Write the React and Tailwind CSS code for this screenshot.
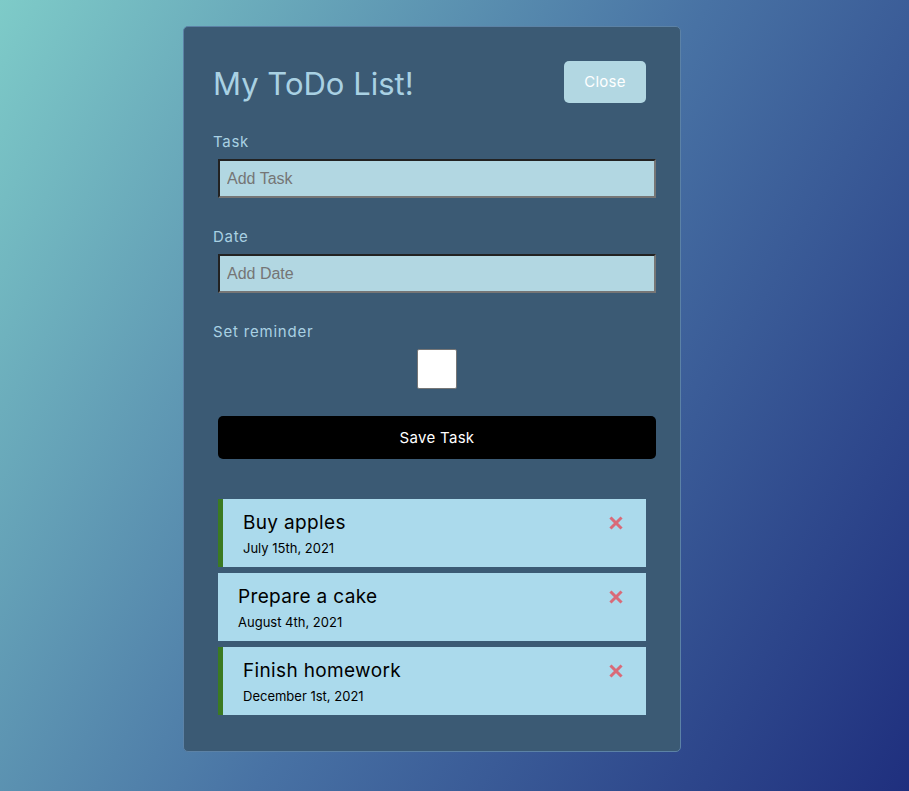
import React from "react";

const tasks = [
  { text: "Buy apples", day: "July 15th, 2021", reminder: true },
  { text: "Prepare a cake", day: "August 4th, 2021", reminder: false },
  { text: "Finish homework", day: "December 1st, 2021", reminder: true },
];

function XIcon() {
  return (
    <svg width="14" height="14" viewBox="0 0 14 14" className="shrink-0">
      <path d="M2.5 2.5 L11.5 11.5 M11.5 2.5 L2.5 11.5" stroke="#d96a78" strokeWidth="3" strokeLinecap="square" />
    </svg>
  );
}

export default function App() {
  return (
    <div
      className="min-h-screen w-full overflow-hidden bg-[linear-gradient(120deg,#7ecbc8_0%,#4872a4_52%,#1f2f7e_100%)] pt-[26px] pl-[183px]"
      style={{ fontFamily: "Inter, 'Noto Sans', sans-serif" }}
    >
      <div className="w-[498px] rounded-[5px] border border-[#5c82a6] bg-[#3b5a74] px-[29px] pt-[29px] pb-[36px]">
        <div className="flex h-[52px] items-center justify-between">
          <h1 className="pt-[3px] text-[31px] font-normal leading-none text-[#a9d1e3]">My ToDo List!</h1>
          <button className="mr-[5px] h-[42px] w-[82px] rounded-[5px] bg-[#b2d7e2] pt-[1px] text-[15px] tracking-[0.3px] text-white">Close</button>
        </div>

        <div className="mt-[23px]">
          <label className="block h-[20px] text-[15px] leading-[22px] tracking-[0.7px] text-[#a9d1e3]">Task</label>
          <input
            className="mt-[8px] ml-[5px] block h-[39px] w-[438px] border-2 border-t-[#222] border-l-[#222] border-b-[#767676] border-r-[#767676] bg-[#b2d7e2] px-[7px] text-[16px] text-black placeholder:text-[#757575] outline-none"
            style={{ fontFamily: "'Liberation Sans', Arial, sans-serif" }}
            placeholder="Add Task"
          />
        </div>

        <div className="mt-[28px]">
          <label className="block h-[20px] text-[15px] leading-[22px] tracking-[0.7px] text-[#a9d1e3]">Date</label>
          <input
            className="mt-[8px] ml-[5px] block h-[39px] w-[438px] border-2 border-t-[#222] border-l-[#222] border-b-[#767676] border-r-[#767676] bg-[#b2d7e2] px-[7px] text-[16px] text-black placeholder:text-[#757575] outline-none"
            style={{ fontFamily: "'Liberation Sans', Arial, sans-serif" }}
            placeholder="Add Date"
          />
        </div>

        <div className="mt-[28px]">
          <label className="block h-[20px] text-[15px] leading-[22px] tracking-[0.8px] text-[#a9d1e3]">Set reminder</label>
          <div className="mt-[8px] flex justify-center pl-[10px]">
            <div className="h-[40px] w-[40px] rounded-[2px] border border-[#767676] bg-white" />
          </div>
        </div>

        <button className="mt-[27px] ml-[5px] block h-[43px] w-[438px] rounded-[5px] bg-black pt-[1px] text-[15px] tracking-[0.3px] text-white">
          Save Task
        </button>

        <div className="mt-[40px] mx-[5px] flex flex-col gap-[6px]">
          {tasks.map((t) => (
            <div
              key={t.text}
              className={`bg-[#abdaec] py-[10px] pr-[23px] ${t.reminder ? "border-l-[5px] border-[#3b7a22] pl-[20px]" : "pl-[20px]"}`}
            >
              <div className="flex h-[28px] items-center justify-between">
                <span className="text-[19px] leading-[30px] tracking-[0.35px] text-black">{t.text}</span>
                <XIcon />
              </div>
              <div className="h-[20px] text-[13px] leading-[22px] text-black">{t.day}</div>
            </div>
          ))}
        </div>
      </div>
    </div>
  );
}
